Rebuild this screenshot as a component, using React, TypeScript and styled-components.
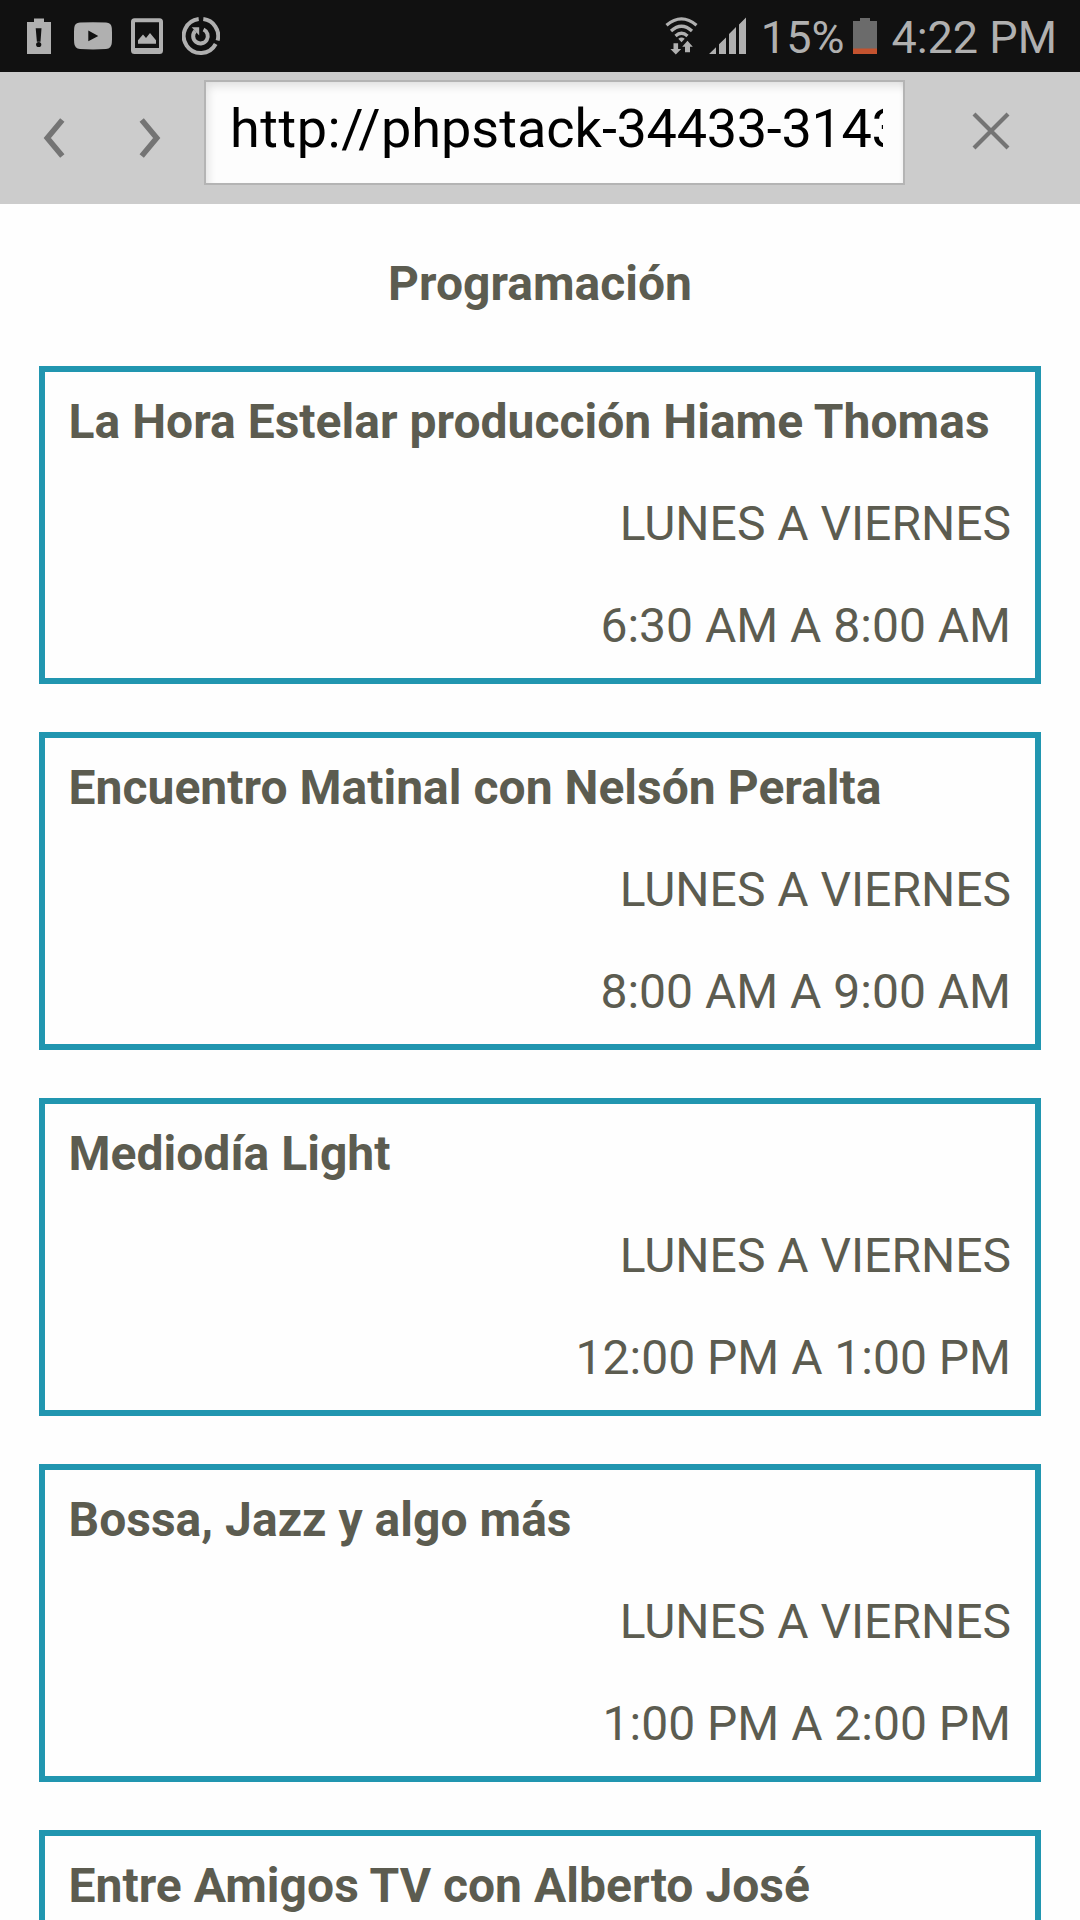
import React from "react";
import styled, { createGlobalStyle } from "styled-components";

const GlobalStyle = createGlobalStyle`
  *, *::before, *::after { box-sizing: border-box; }
  html, body { margin: 0; padding: 0; background: #fefefe; }
  body { font-family: Roboto, "Liberation Sans", sans-serif; overflow: hidden; }
  h1, h2, p { margin: 0; }
`;

const Screen = styled.div`
  display: flex;
  flex-direction: column;
  width: 1080px;
  height: 1920px;
  overflow: hidden;
  background: #fefefe;
`;

const StatusBar = styled.header`
  display: flex;
  flex: none;
  justify-content: space-between;
  align-items: flex-start;
  height: 72px;
  padding: 16px 23px 0 26px;
  background: #111;
  color: #b0b0b0;
`;

const StatusGroup = styled.div`
  display: flex;
  height: 40px;
`;

const Glyph = styled.svg<{ $before?: number }>`
  flex: none;
  display: block;
  height: 40px;
  margin-left: ${(p) => p.$before ?? 0}px;
`;

const StatusText = styled.span<{ $before: number }>`
  margin-left: ${(p) => p.$before}px;
  font-size: 45px;
  line-height: 40px;
  padding-top: 2px;
  white-space: nowrap;
`;

const Toolbar = styled.nav`
  display: flex;
  flex: none;
  align-items: flex-start;
  height: 132px;
  padding: 8px 0 0 40px;
  background: #ccc;
`;

const NavButton = styled.button<{ $before: number; $down: number }>`
  flex: none;
  margin: ${(p) => p.$down}px 0 0 ${(p) => p.$before}px;
  padding: 0;
  border: 0;
  background: none;
  line-height: 0;
  color: #747474;
`;

const UrlField = styled.div`
  flex: none;
  width: 701px;
  height: 105px;
  margin-left: 43px;
  padding: 0 20px 0 24px;
  border: 2px solid #b4b4b4;
  background: #fdfdfd;
  box-shadow: inset 5px 7px 10px -3px rgba(0, 0, 0, 0.12), inset -3px 0 4px -2px rgba(0, 0, 0, 0.06);
`;

const UrlText = styled.div`
  overflow: hidden;
  white-space: nowrap;
  font-size: 54px;
  line-height: 94px;
  color: #000;
`;

const UrlPart = styled.span<{ $track: number }>`
  letter-spacing: ${(p) => p.$track}px;
`;

const Page = styled.main`
  display: flex;
  flex-direction: column;
  padding: 29px 39px 0;
  color: #5c5c50;
  font-size: 48px;
  line-height: 102px;
`;

const PageTitle = styled.h1`
  font-size: 48px;
  font-weight: 700;
  text-align: center;
`;

const Schedule = styled.div`
  display: flex;
  flex-direction: column;
  gap: 48px;
  margin-top: 31px;
`;

const Card = styled.section`
  flex: none;
  height: 318px;
  padding: 0 24px 0 23.5px;
  border: 6px solid #2196b0;
`;

const ShowName = styled.h2`
  margin-top: -1px;
  font-size: 48px;
  font-weight: 700;
  letter-spacing: 0.02px;
  white-space: nowrap;
`;

const ShowTime = styled.p`
  text-align: right;
`;

const shows = [
  { name: "La Hora Estelar producción Hiame Thomas", time: "6:30 AM A 8:00 AM" },
  { name: "Encuentro Matinal con Nelsón Peralta", time: "8:00 AM A 9:00 AM" },
  { name: "Mediodía Light", time: "12:00 PM A 1:00 PM" },
  { name: "Bossa, Jazz y algo más", time: "1:00 PM A 2:00 PM" },
  { name: "Entre Amigos TV con Alberto José", time: "" },
];

const BatteryAlert = () => (
  <Glyph width="26" viewBox="26 16 26 40" fill="currentColor">
    <path fillRule="evenodd" d="M27 22h7v-3.5h10V22h7v32H27zM35.7 28.2h5.8l-1 13.5h-3.6z" />
    <circle cx="38.7" cy="44.5" r="2.6" fill="#111" />
  </Glyph>
);

const VideoIcon = () => (
  <Glyph width="38" $before={22} viewBox="74 16 38 40" fill="currentColor">
    <path fillRule="evenodd" d="M80 22.6Q93 21.8 106 22.6Q111.5 23 111.8 28Q112.3 36 111.8 43Q111.5 48.6 106 49Q93 49.8 80 49Q74.5 48.6 74.2 43Q73.7 36 74.2 28Q74.5 23 80 22.6zM88.3 30.5v10.8l10-5.4z" />
  </Glyph>
);

const PictureIcon = () => (
  <Glyph width="32" $before={19} viewBox="131 16 32 40" fill="currentColor">
    <path fillRule="evenodd" d="M134.5 18.3h25q3.5 0 3.5 3.5v28.7q0 3.5-3.5 3.5h-25q-3.5 0-3.5-3.5V21.8q0-3.5 3.5-3.5zM135 22.3v25.7h24V22.3z" />
    <path d="M138 43.8v-3.5l5-5.8 3 3.6 4-5.1 6 7.3v3.5z" />
  </Glyph>
);

const UpdateIcon = () => (
  <Glyph width="38" $before={19} viewBox="182 16 38 40" fill="none" stroke="currentColor" strokeWidth="4">
    <path d="M198.7 19.1A17 17 0 1 0 215.7 44" />
    <path d="M203.3 19.1A17 17 0 0 1 217.6 40.5" />
    <path d="M203.5 29.5A7.3 7.3 0 1 1 195.3 31" />
    <path d="M191.7 27.2h7.5v8.3z" fill="currentColor" stroke="none" />
  </Glyph>
);

const WifiIcon = () => (
  <Glyph width="34" viewBox="665 16 34 40" fill="none" stroke="currentColor" strokeWidth="3.2">
    <path d="M666.5 25.2Q681.5 12.5 696.5 25.2M671 31Q681.5 21.5 692 31M675.5 36Q681.5 30.5 687.5 36" />
    <path d="M678.3 38.8q3.2-2.6 6.4 0l-3.2 3.5z" fill="currentColor" stroke="none" />
    <path d="M673.5 43.3h4.6v5.7h3.1l-5.4 5.5-5.4-5.5h3.1zM685 52.2h5v-5.4h2.8l-5.3-6-5.3 6h2.8z" fill="currentColor" stroke="none" />
  </Glyph>
);

const SignalIcon = () => (
  <Glyph width="38" $before={10} viewBox="709 16 38 40" fill="currentColor">
    <path d="M709 54l7-6.8V54zM719 54V44.3l7-6.8V54zM729 54V34l7-7v27zM739 54V24.5l7-7V54z" />
  </Glyph>
);

const BatteryLow = () => (
  <Glyph width="24" $before={9} viewBox="853 16 24 40">
    <path d="M853 21h7v-3h10v3h7v28h-24z" fill="#6b6b6b" />
    <path d="M853 48.5h24V54h-24z" fill="#c4532f" />
  </Glyph>
);

export default function App() {
  return (
    <Screen>
      <GlobalStyle />
      <StatusBar>
        <StatusGroup>
          <BatteryAlert />
          <VideoIcon />
          <PictureIcon />
          <UpdateIcon />
        </StatusGroup>
        <StatusGroup>
          <WifiIcon />
          <SignalIcon />
          <StatusText $before={14}>15%</StatusText>
          <BatteryLow />
          <StatusText $before={14}>4:22 PM</StatusText>
        </StatusGroup>
      </StatusBar>
      <Toolbar>
        <NavButton $before={3} $down={38} aria-label="Atrás">
          <svg width="22" height="40" viewBox="0 0 22 40" fill="none" stroke="currentColor" strokeWidth="5.6">
            <path d="M19.3 2L4.3 20l15 18" />
          </svg>
        </NavButton>
        <NavButton $before={74} $down={38} aria-label="Adelante">
          <svg width="22" height="40" viewBox="0 0 22 40" fill="none" stroke="currentColor" strokeWidth="5.6">
            <path d="M2.7 2l15 18-15 18" />
          </svg>
        </NavButton>
        <UrlField>
          <UrlText>
            <UrlPart $track={0.55}>http://</UrlPart>
            <UrlPart $track={0}>phpstack</UrlPart>
            <UrlPart $track={-0.3}>-34433-314346</UrlPart>
          </UrlText>
        </UrlField>
        <NavButton $before={67} $down={32} aria-label="Cerrar">
          <svg width="38" height="38" viewBox="0 0 38 38" fill="none" stroke="currentColor" strokeWidth="4.2">
            <path d="M2 2l34 34M36 2L2 36" />
          </svg>
        </NavButton>
      </Toolbar>
      <Page>
        <PageTitle>Programación</PageTitle>
        <Schedule>
          {shows.map((show) => (
            <Card key={show.name}>
              <ShowName>{show.name}</ShowName>
              {show.time && <ShowTime>LUNES A VIERNES</ShowTime>}
              {show.time && <ShowTime>{show.time}</ShowTime>}
            </Card>
          ))}
        </Schedule>
      </Page>
    </Screen>
  );
}
